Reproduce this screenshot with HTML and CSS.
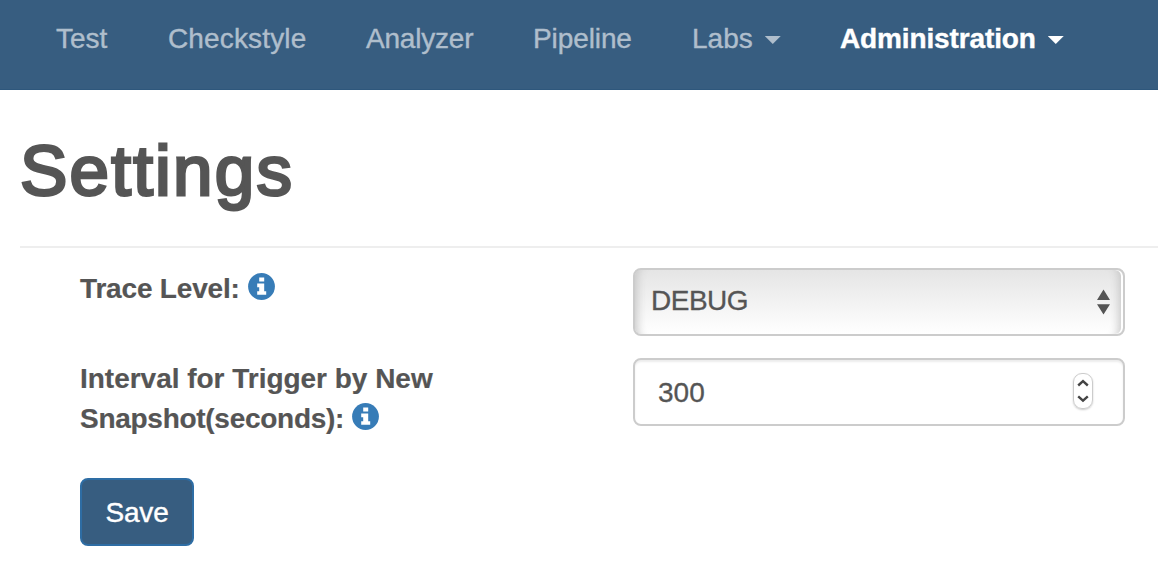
FILE: index.html
```html
<!DOCTYPE html>
<html lang="en">
<head>
<meta charset="utf-8">
<title>Settings</title>
<link rel="stylesheet" href="styles.css">
</head>
<body>
<nav class="navbar">
  <a class="nav-link nav-test">Test</a>
  <a class="nav-link nav-checkstyle">Checkstyle</a>
  <a class="nav-link nav-analyzer">Analyzer</a>
  <a class="nav-link nav-pipeline">Pipeline</a>
  <a class="nav-link nav-labs">Labs<span class="caret"></span></a>
  <a class="nav-link nav-admin active">Administration<span class="caret"></span></a>
</nav>
<main class="content">
  <header class="page-header"><h1 class="title">Settings</h1></header>
  <form class="settings">
    <div class="row">
      <div class="label"><span class="label-trace">Trace Level:</span>
        <svg class="info" viewBox="0 0 27 27"><circle cx="13.5" cy="13.5" r="13.4" fill="#377cb7"/><path fill="#fff" d="M11.2 4.5h5v4.1h-5zM9.2 10.6h7v7.6h2v3.6h-9v-3.6h2v-4h-2z"/></svg>
      </div>
      <div class="field select"><span class="select-text">DEBUG</span>
        <svg class="arrows" viewBox="0 0 13 26"><path fill="#555" d="M6.5 0.5L13 11H0zM0 15.2h13L6.5 25.5z"/></svg>
      </div>
    </div>
    <div class="row row-interval">
      <div class="label"><span class="label-one">Interval for Trigger by New</span><br><span class="label-two">Snapshot(seconds):</span>
        <svg class="info" viewBox="0 0 27 27"><circle cx="13.5" cy="13.5" r="13.4" fill="#377cb7"/><path fill="#fff" d="M11.2 4.5h5v4.1h-5zM9.2 10.6h7v7.6h2v3.6h-9v-3.6h2v-4h-2z"/></svg>
      </div>
      <div class="field number"><span class="number-text">300</span>
        <span class="stepper"><svg class="chevrons" viewBox="0 0 20 36"><path d="M5.2 12.5l4.8-4.3 4.8 4.3M5.2 23.3l4.8 4.3 4.8-4.3" fill="none" stroke="#444" stroke-width="2.4"/></svg></span>
      </div>
    </div>
    <button class="save" type="button">Save</button>
  </form>
</main>
</body>
</html>
```
FILE: styles.css
```css
* { box-sizing: border-box; }
body {
  margin: 0;
  background: #fff;
  color: #555;
  font: 28px/40px "Liberation Sans", Arial, sans-serif;
  overflow: hidden;
}
.navbar {
  display: flex;
  height: 90px;
  padding: 19px 0 0 56px;
  background: #375d80;
  border-bottom: 1px solid #2e577c;
  white-space: nowrap;
  -webkit-text-stroke: .4px;
}
.nav-link { display: flex; flex: none; color: #afbecc; }
.nav-test { width: 112px; }
.nav-checkstyle { width: 198px; letter-spacing: .15px; }
.nav-analyzer { width: 167px; letter-spacing: -.2px; }
.nav-pipeline { width: 159px; letter-spacing: -.1px; }
.nav-labs { width: 148px; }
.active { color: #fff; font-weight: 700; letter-spacing: -.13px; }
.caret {
  width: 16px;
  height: 8px;
  margin: 17px 0 0 12px;
  background: currentColor;
  clip-path: polygon(0 0, 100% 0, 50% 100%);
}
.content { padding-left: 20px; }
.page-header { height: 158px; padding-top: 41px; border-bottom: 2px solid #eee; }
.title {
  margin: 0;
  font-size: 71px;
  line-height: 80px;
  font-weight: 400;
  letter-spacing: 2.2px;
  -webkit-text-stroke: 2.9px #555;
}
.settings { padding: 20px 33px 0 60px; }
.row { display: flex; justify-content: space-between; height: 90px; }
.label { padding-top: 1px; font-weight: 700; white-space: nowrap; -webkit-text-stroke: .2px; }
.label-trace { letter-spacing: -.18px; }
.label-one { letter-spacing: -.02px; }
.label-two { letter-spacing: -.28px; }
.info { width: 27px; height: 27px; vertical-align: -2px; }
.field {
  display: flex;
  justify-content: space-between;
  width: 492px;
  height: 68px;
  border: 2px solid #ccc;
  border-radius: 8px;
  line-height: 64px;
}
.select {
  padding: 0 13px 0 16px;
  line-height: 62px;
  background: linear-gradient(#e5e5e5, #fff);
  box-shadow: inset 12px 0 10px -10px #c4c4c4, inset -2px 0 0 #fff, inset -14px 0 10px -10px #c4c4c4;
}
.select-text { letter-spacing: -.5px; -webkit-text-stroke: .3px; }
.arrows { width: 13px; height: 26px; margin-top: 19px; }
.number { padding: 0 30px 0 23px; line-height: 66px; box-shadow: inset 0 2px 2px rgba(0, 0, 0, .075); }
.number-text { -webkit-text-stroke: .3px; }
.stepper {
  width: 20px;
  height: 36px;
  margin-top: 13px;
  border: 1px solid #ccc;
  border-radius: 9px;
  box-shadow: 0 1px 2px #ccc;
}
.chevrons { display: block; width: 20px; height: 36px; margin: -1px; }
.save {
  display: block;
  width: 114px;
  height: 68px;
  margin-top: 30px;
  padding: 1px 0 0;
  border: 2px solid #2e6da4;
  border-radius: 8px;
  background: #375d80;
  color: #fff;
  font: 28px/40px "Liberation Sans", Arial, sans-serif;
  letter-spacing: -.2px;
  -webkit-text-stroke: .4px;
}
```
